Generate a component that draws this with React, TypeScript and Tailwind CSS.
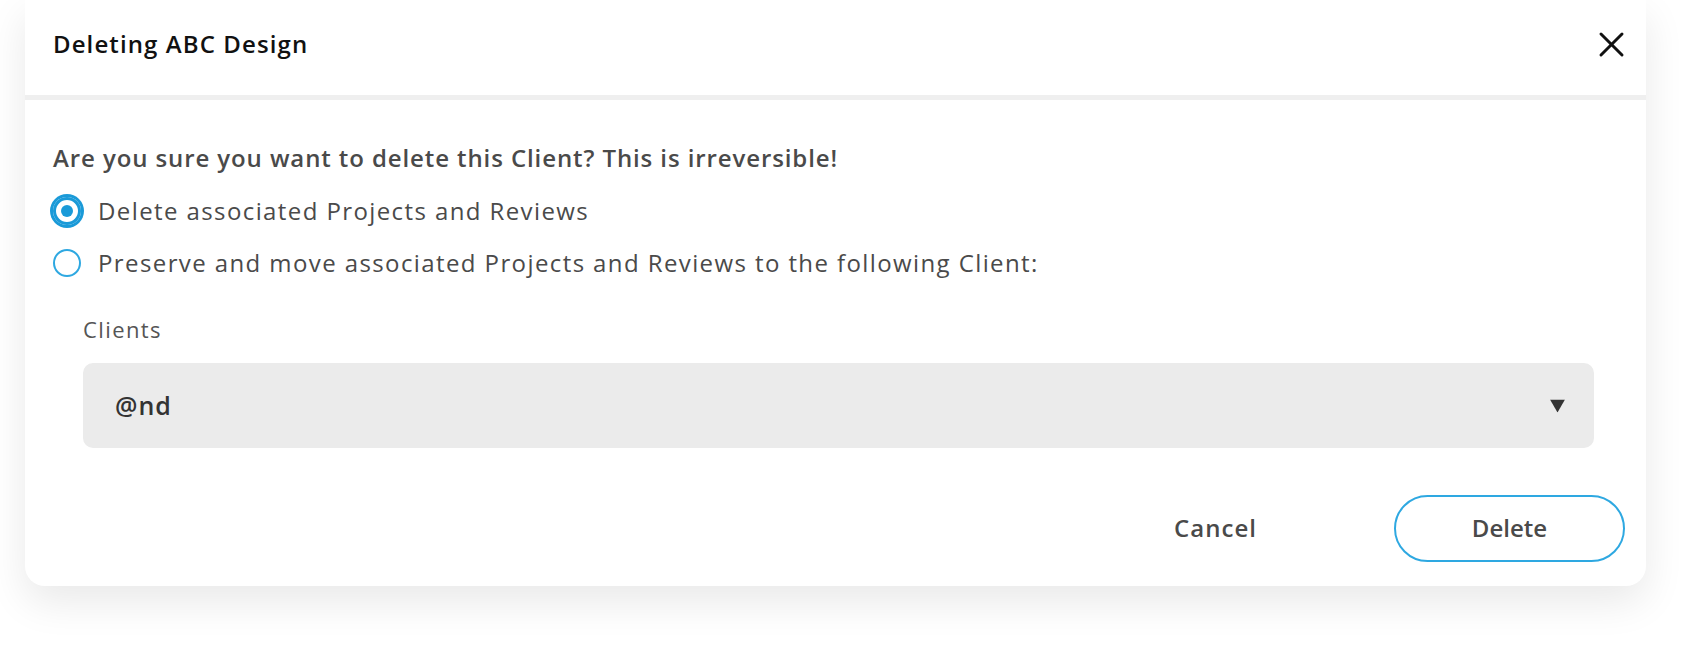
import { useState } from "react";

type Choice = "delete" | "move";

export default function App() {
  const [choice, setChoice] = useState<Choice>("delete");
  const [client, setClient] = useState("@nd");

  return (
    <div className="min-h-screen bg-white font-['Open_Sans',sans-serif] text-[#4a4a4a]">
      <div className="ml-[25px] w-[1621px] rounded-b-[20px] bg-white shadow-[0_16px_40px_rgba(0,0,0,0.09)]">
        <header className="flex h-[95px] items-start justify-between pl-[28px] pr-[21px] pt-[30px]">
          <h2 className="text-[24px] font-semibold leading-[28px] tracking-[1.1px] text-[#111]">Deleting ABC Design</h2>
          <button type="button" aria-label="Close" className="mt-[1px] text-[#111]">
            <svg width="27" height="27" viewBox="0 0 27 27" fill="none" stroke="currentColor" strokeWidth="3" strokeLinecap="round">
              <line x1="3" y1="3" x2="24" y2="24" />
              <line x1="24" y1="3" x2="3" y2="24" />
            </svg>
          </button>
        </header>
        <div className="h-[5px] bg-[#efefef]" />

        <div className="pl-[28px] pr-[21px] pb-[24px] pt-[43px]">
          <p className="text-[24px] font-semibold leading-[30px] tracking-[0.9px]">
            Are you sure you want to delete this Client? This is irreversible!
          </p>

          <div className="mt-[21px] space-y-[18px]">
            <RadioRow
              checked={choice === "delete"}
              onSelect={() => setChoice("delete")}
              label="Delete associated Projects and Reviews"
            />
            <RadioRow
              checked={choice === "move"}
              onSelect={() => setChoice("move")}
              label="Preserve and move associated Projects and Reviews to the following Client:"
            />
          </div>

          <div className="ml-[30px] mr-[31px] mt-[36px]">
            <label className="block text-[22px] leading-[26px] tracking-[1.4px] text-[#555]">Clients</label>
            <div className="relative mt-[21px]">
              <select
                value={client}
                onChange={(e) => setClient(e.target.value)}
                className="h-[85px] w-full appearance-none rounded-[10px] bg-[#ebebeb] pl-[32px] pr-[60px] text-[25px] font-semibold tracking-[1px] text-[#333] outline-none"
              >
                <option value="@nd">@nd</option>
                <option value="acme">Acme Studio</option>
                <option value="north">North Creative</option>
              </select>
              <svg
                className="pointer-events-none absolute right-[29px] top-1/2 -translate-y-1/2"
                width="15"
                height="13"
                viewBox="0 0 15 13"
              >
                <polygon points="0,0 15,0 7.5,13" fill="#333" />
              </svg>
            </div>
          </div>

          <div className="mt-[47px] flex justify-end gap-[63px]">
            <button type="button" className="h-[67px] w-[231px] rounded-full pb-[2px] text-[24px] font-semibold tracking-[1px] text-[#4a4a4a]">
              Cancel
            </button>
            <button
              type="button"
              className="h-[67px] w-[231px] rounded-full border-2 border-[#2ea8e1] pb-[2px] text-[24px] font-semibold text-[#4a4a4a]"
            >
              Delete
            </button>
          </div>
        </div>
      </div>
    </div>
  );
}

function RadioRow({ checked, onSelect, label }: { checked: boolean; onSelect: () => void; label: string }) {
  return (
    <button type="button" onClick={onSelect} className="flex h-[34px] items-center gap-[17px] text-left">
      <span className="flex w-[28px] shrink-0 justify-center">
        {checked ? (
          <span className="flex h-[28px] w-[28px] items-center justify-center rounded-full border-[3px] border-[#1a9ad8] shadow-[0_0_0_3px_#1a9ad8]">
            <span className="h-[12px] w-[12px] rounded-full bg-[#1a9ad8]" />
          </span>
        ) : (
          <span className="h-[28px] w-[28px] rounded-full border-2 border-[#2ea8e1]" />
        )}
      </span>
      <span className="text-[24px] leading-[30px] tracking-[1.4px] text-[#4a4a4a]">{label}</span>
    </button>
  );
}
